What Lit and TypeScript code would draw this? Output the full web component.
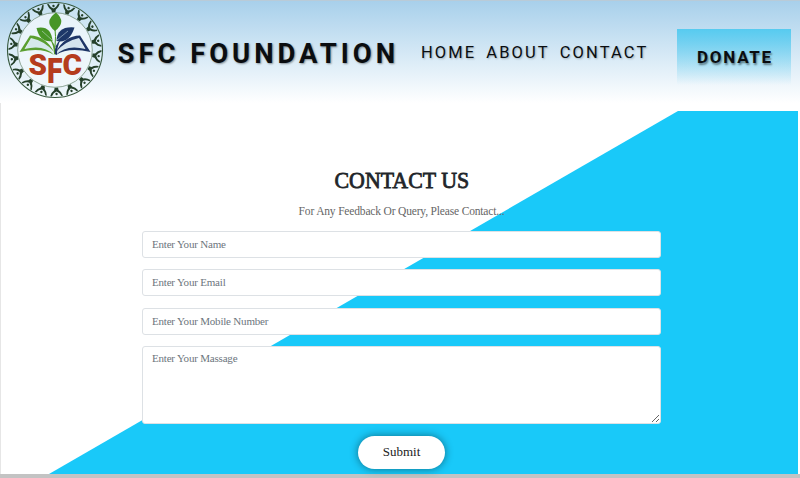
import { LitElement, html, css, svg } from 'lit';
import { customElement } from 'lit/decorators.js';

const FIGURES = 18;

@customElement('sfc-logo')
class SfcLogo extends LitElement {
  static styles = css`
    :host { display: block; width: 98px; height: 98px; flex: none; }
    svg { display: block; width: 100%; height: 100%; }
    .letters { font-family: Roboto, sans-serif; font-weight: 900; fill: #b53c1d; }
  `;
  render() {
    const people = Array.from({ length: FIGURES }, (_, i) => svg`
      <g transform="rotate(${i * 360 / FIGURES - 2} 49 49)" fill="#25402a">
        <path d="M42.6 3 L44.2 2.700 Q46 6.500 49 7.400 Q52 6.500 53.800 2.700 L55.400 3 Q54 7 51.200 8.800 L50.700 11.300 H47.300 L46.800 8.800 Q44 7 42.600 3Z"/>
        <circle cx="49" cy="4.900" r="1.200"/>
      </g>`);
    return html`<svg viewBox="0 0 98 98">
      <circle cx="49" cy="49" r="47.5" fill="#e3f1f8" fill-opacity=".5" stroke="#35573b" stroke-width="1.1"/>
      ${people}
      <circle cx="49" cy="49" r="37.3" fill="#f3f9fc" fill-opacity=".7" stroke="#66846a" stroke-width=".7"/>
      <path d="M19 49 L25 37 Q40 38 48 54 Q36 45 19 49Z" fill="#d5e9ea"/>
      <path d="M79 49 L73 37 Q58 38 50 54 Q62 45 79 49Z" fill="#d5e4ee"/>
      <path d="M13.5 51 L24 34.5 Q40 35 48 51 Q39 40 25 37 L18.5 48 Q38 43 48 54 Q36 46 13.5 51Z" fill="#5a9f30"/>
      <path d="M84.5 51 L74 34.5 Q58 35 50 51 Q59 40 73 37 L79.5 48 Q60 43 50 54 Q62 46 84.5 51Z" fill="#1e3566"/>
      <path d="M48 53 Q48 44 43 37 Q51 43 49.5 54Z" fill="#55992c"/>
      <path d="M49 53 Q48 44 55 38 Q51 45 51 54Z" fill="#1e3566"/>
      <path d="M30.5 27 Q45 24 46.5 40 Q34 42 30.5 27Z" fill="#479526"/>
      <path d="M50 11.5 Q61 21 49 30 Q37 21 50 11.500Z" fill="#479526"/>
      <path d="M49 28 Q50 34 49 46" fill="none" stroke="#479526" stroke-width="1"/>
      <path d="M68.5 26.500 Q51 25 50.500 40 Q63 43 68.500 26.500Z" fill="#1d3768"/>
      <path d="M46 39 L36 30 M51 39 L62 30" fill="none" stroke="#d5e9ea" stroke-width=".5"/>
      <g class="letters">
        <text x="22.5" y="74" font-size="30" textLength="18.5" lengthAdjust="spacingAndGlyphs">S</text>
        <text x="41" y="82" font-size="35" textLength="15.500" lengthAdjust="spacingAndGlyphs">F</text>
        <text x="56.5" y="74" font-size="30" textLength="19.500" lengthAdjust="spacingAndGlyphs">C</text>
      </g>
    </svg>`;
  }
}

@customElement('app-root')
class AppRoot extends LitElement {
  static styles = css`
    :host { display: block; width: 800px; height: 478px; overflow: hidden; background: #fff; box-sizing: border-box; }
    * { box-sizing: border-box; }
    .page { display: flex; flex-direction: column; height: 478px; }
    header { height: 103px; flex: none; display: flex; align-items: flex-start; padding-left: 6px;
      border-top: 1px solid #b9cbd8; background: linear-gradient(#a8d0eb, #fff); font-family: Roboto, sans-serif; color: #0a0d10; }
    .brand { margin: 37px 0 0 13.5px; width: 303.5px; font-size: 27.5px; line-height: 32px; font-weight: 700;
      letter-spacing: 3.95px; white-space: nowrap; text-shadow: 1px 1px 2px #0006; }
    nav { display: flex; gap: 10px; margin-top: 41px; width: 256px; font-size: 16.5px; line-height: 22px;
      letter-spacing: 2.1px; white-space: nowrap; text-shadow: 1px 1px 2px #0004; }
    .donate { margin-top: 28px; width: 114px; height: 56px; padding-left: 20px; line-height: 57px; font-size: 17px;
      font-weight: 700; letter-spacing: 1.75px; background: linear-gradient(#57cbf0, #57cbf000); text-shadow: 1px 2px 2px #0007; }
    main { flex: 1; position: relative; display: flex; flex-direction: column; align-items: center; padding-top: 62px;
      margin-right: 2px; border-left: 1px solid #e6e6e6; font-family: "Liberation Serif", serif; }
    .wedge { position: absolute; inset: 8px 0 0 0; background: #19c9f9; clip-path: polygon(677px 0, 100% 0, 100% 100%, 48px 100%); }
    .content { position: relative; width: 519px; display: flex; flex-direction: column; align-items: center; margin-left: 4px; }
    h1 { margin: 0; font-size: 24px; line-height: 30px; font-weight: 400; color: #212529; transform: scaleX(.912); -webkit-text-stroke: .8px #212529; white-space: nowrap; }
    p { margin: 8px 0 0; font-size: 11.5px; line-height: 16px; letter-spacing: -.17px; color: #666; white-space: nowrap; }
    form { display: flex; flex-direction: column; align-items: center; gap: 11.3px; width: 100%; margin-top: 12px; }
    input, textarea { display: block; width: 100%; height: 27px; margin: 0; padding: 0 9px; font: 11px/14px "Liberation Serif", serif;
      border: 1px solid #dde1e5; border-radius: 3px; background: #fff; outline: none; }
    input { padding-bottom: 1px; }
    textarea { height: 78px; padding-top: 4px; resize: vertical; }
    input::placeholder, textarea::placeholder { color: #6c757d; opacity: 1; letter-spacing: -.2px; }
    button { width: 87px; height: 33px; padding: 0; border: 0; border-radius: 17px; background: #fff; color: #222;
      font: 13px/32px "Liberation Serif", serif; padding-bottom: 2px; margin-top: 1px; box-shadow: 0 0 8px #0007; }
    footer { height: 4px; flex: none; background: #c3c3c3; }
  `;
  render() {
    return html`<div class="page">
      <header>
        <sfc-logo></sfc-logo>
        <div class="brand">SFC FOUNDATION</div>
        <nav><span>HOME</span><span>ABOUT</span><span>CONTACT</span></nav>
        <div class="donate">DONATE</div>
      </header>
      <main>
        <div class="wedge"></div>
        <div class="content">
          <h1>CONTACT US</h1>
          <p>For Any Feedback Or Query, Please Contact...</p>
          <form>
            <input placeholder="Enter Your Name">
            <input placeholder="Enter Your Email">
            <input placeholder="Enter Your Mobile Number">
            <textarea placeholder="Enter Your Massage"></textarea>
            <button type="button">Submit</button>
          </form>
        </div>
      </main>
      <footer></footer>
    </div>`;
  }
}
